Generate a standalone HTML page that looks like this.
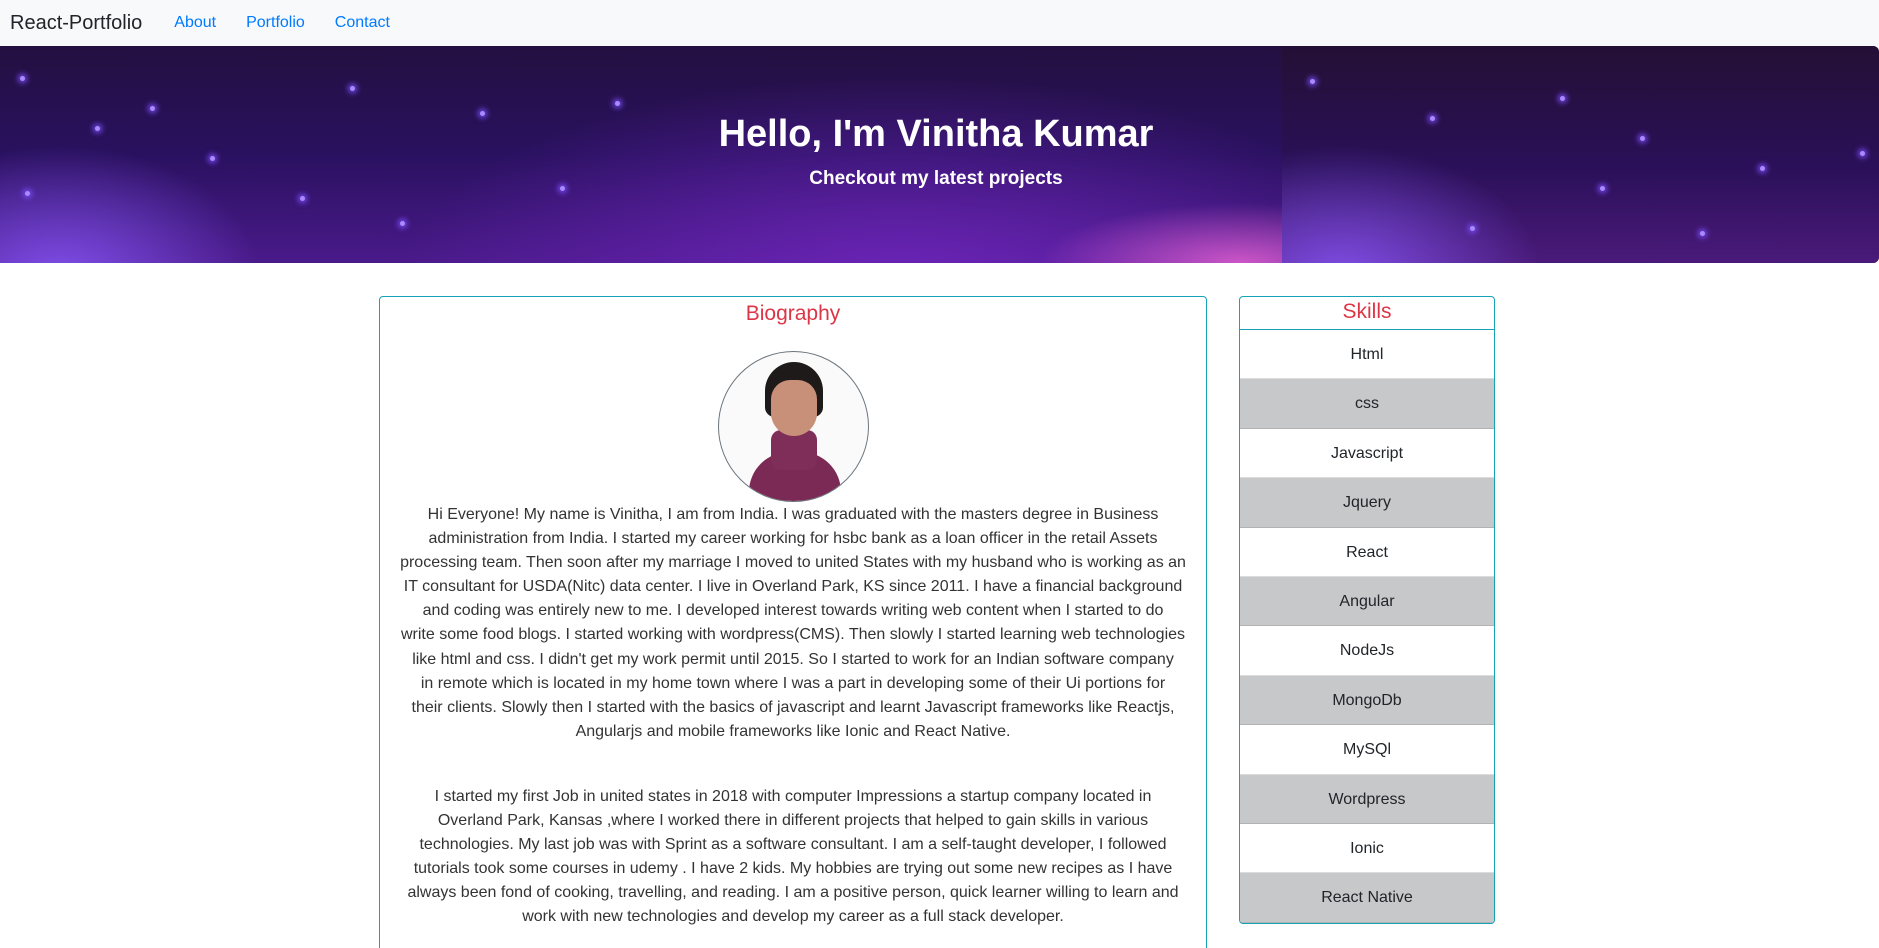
<!DOCTYPE html>
<html style="height:948px;overflow:hidden"><head><meta charset="utf-8">
<style>
*{box-sizing:border-box;margin:0;padding:0}
body{width:1879px;height:948px;overflow:hidden;background:#fff;font-family:"Liberation Sans",sans-serif;color:#212529;position:relative}
.nav{height:46px;background:#f8f9fa;display:flex;align-items:center;padding-left:10px}
.brand{font-size:20px;color:#212529;margin-right:32px}
.nav a{color:#007bff;font-size:16px;margin-right:30px;text-decoration:none}
.hero{position:absolute;top:46px;left:0;width:1879px;height:217px;border-radius:0 6px 6px 0;overflow:hidden;
background:
radial-gradient(ellipse 200px 60px at 1240px 217px,rgba(255,110,220,.7),transparent),
radial-gradient(ellipse 200px 130px at 60px 230px,rgba(140,90,255,.8),transparent),
radial-gradient(ellipse 500px 200px at 900px 230px,rgba(120,40,200,.7),transparent),
linear-gradient(180deg,#241040 0%,#2a1160 50%,#4a1a8a 100%)}
.seam{position:absolute;left:1282px;top:0;width:597px;height:217px;background:
radial-gradient(ellipse 200px 130px at 60px 230px,rgba(140,90,255,.8),transparent),
linear-gradient(180deg,#241035 0%,#2a1058 55%,#4a1a7a 100%)}
.star{position:absolute;width:5px;height:5px;border-radius:50%;background:#a98bff;box-shadow:0 0 6px 2px #7d4dff}
.hero h1{position:absolute;top:67px;left:0;width:1872px;text-align:center;color:#fff;font-size:38px;font-weight:bold}
.hero h2{position:absolute;top:122px;left:0;width:1872px;text-align:center;color:#fff;font-size:19px;font-weight:bold}
.bio{position:absolute;left:379px;top:296px;width:828px;height:662px;border:1px solid #17a2b8;border-radius:4px;text-align:center}
.bio h3{color:#dc3545;font-size:21px;font-weight:normal;margin-top:2px;height:30px;line-height:30px}
.pic{width:151px;height:151px;border-radius:50%;border:1px solid #6c757d;margin:22px auto 0;overflow:hidden;position:relative;background:#fafafa}
.p{font-size:16px;line-height:24.1px;color:#333;margin-top:1px;white-space:nowrap}
.skills{position:absolute;left:1239px;top:296px;width:256px;height:628px;border:1px solid #17a2b8;border-radius:4px;overflow:hidden}
.skills h3{color:#dc3545;font-size:21px;font-weight:normal;text-align:center;height:33px;line-height:30px;border-bottom:1px solid #17a2b8}
.sk{height:49.4px;line-height:49px;text-align:center;font-size:16px;border-bottom:1px solid #dcdcdc;color:#212529}
.sk.g{background:#c6c8ca;border-color:#b0b2b4}
</style></head><body>
<div class="nav"><span class="brand">React-Portfolio</span><a>About</a><a>Portfolio</a><a>Contact</a></div>
<div class="hero">
<div class="seam"></div>
<div class="star" style="left:20px;top:30px"></div><div class="star" style="left:150px;top:60px"></div><div class="star" style="left:95px;top:80px"></div><div class="star" style="left:350px;top:40px"></div><div class="star" style="left:210px;top:110px"></div><div class="star" style="left:300px;top:150px"></div><div class="star" style="left:480px;top:65px"></div><div class="star" style="left:615px;top:55px"></div><div class="star" style="left:560px;top:140px"></div><div class="star" style="left:25px;top:145px"></div><div class="star" style="left:1310px;top:33px"></div><div class="star" style="left:1430px;top:70px"></div><div class="star" style="left:1560px;top:50px"></div><div class="star" style="left:1640px;top:90px"></div><div class="star" style="left:1760px;top:120px"></div><div class="star" style="left:1860px;top:105px"></div><div class="star" style="left:1470px;top:180px"></div><div class="star" style="left:1700px;top:185px"></div><div class="star" style="left:1600px;top:140px"></div><div class="star" style="left:400px;top:175px"></div>
<h1>Hello, I'm Vinitha Kumar</h1>
<h2>Checkout my latest projects</h2>
</div>
<div class="bio">
<h3>Biography</h3>
<div class="pic">
<div style="position:absolute;left:30px;top:100px;width:92px;height:60px;background:#7a2a55;border-radius:40px 40px 0 0"></div>
<div style="position:absolute;left:52px;top:78px;width:46px;height:40px;background:#7f2e5a;border-radius:10px"></div>
<div style="position:absolute;left:46px;top:10px;width:58px;height:55px;background:#1f1a1a;border-radius:30px 30px 10px 10px"></div>
<div style="position:absolute;left:52px;top:28px;width:46px;height:56px;background:#c89078;border-radius:20px 20px 24px 24px"></div>
</div>
<div class="p">Hi Everyone! My name is Vinitha, I am from India. I was graduated with the masters degree in Business<br>administration from India. I started my career working for hsbc bank as a loan officer in the retail Assets<br>processing team. Then soon after my marriage I moved to united States with my husband who is working as an<br>IT consultant for USDA(Nitc) data center. I live in Overland Park, KS since 2011. I have a financial background<br>and coding was entirely new to me. I developed interest towards writing web content when I started to do<br>write some food blogs. I started working with wordpress(CMS). Then slowly I started learning web technologies<br>like html and css. I didn't get my work permit until 2015. So I started to work for an Indian software company<br>in remote which is located in my home town where I was a part in developing some of their Ui portions for<br>their clients. Slowly then I started with the basics of javascript and learnt Javascript frameworks like Reactjs,<br>Angularjs and mobile frameworks like Ionic and React Native.</div>
<div class="p" style="margin-top:41px">I started my first Job in united states in 2018 with computer Impressions a startup company located in<br>Overland Park, Kansas ,where I worked there in different projects that helped to gain skills in various<br>technologies. My last job was with Sprint as a software consultant. I am a self-taught developer, I followed<br>tutorials took some courses in udemy . I have 2 kids. My hobbies are trying out some new recipes as I have<br>always been fond of cooking, travelling, and reading. I am a positive person, quick learner willing to learn and<br>work with new technologies and develop my career as a full stack developer.</div>
</div>
<div class="skills">
<h3>Skills</h3>
<div class="sk">Html</div><div class="sk g">css</div><div class="sk">Javascript</div><div class="sk g">Jquery</div><div class="sk">React</div><div class="sk g">Angular</div><div class="sk">NodeJs</div><div class="sk g">MongoDb</div><div class="sk">MySQl</div><div class="sk g">Wordpress</div><div class="sk">Ionic</div><div class="sk g">React Native</div>
</div>
</body></html>
